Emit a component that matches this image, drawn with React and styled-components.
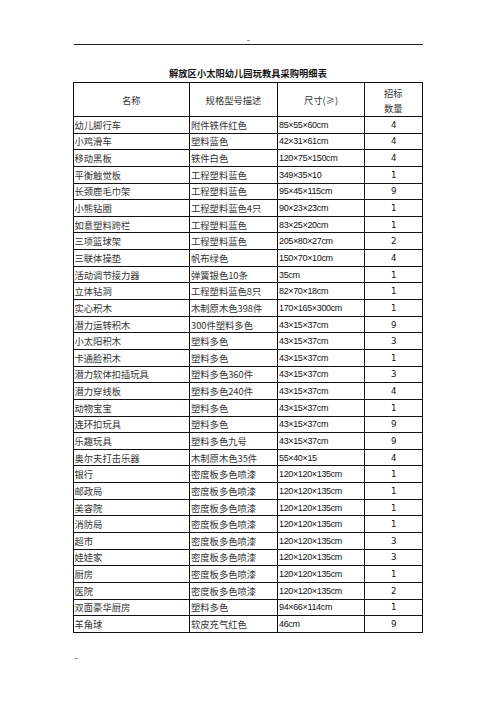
import React from "react";
import styled, { createGlobalStyle } from "styled-components";

const Global = createGlobalStyle`
  html, body { margin: 0; padding: 0; background: #fff; }
  body { font-family: "Noto Sans CJK SC", "Liberation Sans", sans-serif; color: #111; }
`;

const Page = styled.div`
  width: 496px;
  height: 702px;
  display: flex;
  flex-direction: column;
  align-items: center;
  box-sizing: border-box;
  padding-top: 40px;
`;

const Dot = styled.div`
  width: 3px;
  height: 1px;
  background: #999;
  align-self: ${(p) => (p.$left ? "flex-start" : "center")};
  margin-left: ${(p) => (p.$left ? "75px" : "0")};
  margin-top: ${(p) => p.$top || 0}px;
`;

const Rule = styled.div`
  width: 349px;
  height: 1px;
  background: #222;
  margin-top: 3px;
  margin-left: 1px;
`;

const Title = styled.h1`
  margin: 21px 0 0 0;
  font-size: 9.2px;
  font-weight: 700;
  line-height: 14px;
  letter-spacing: 0.1px;
  color: #111;
`;

const Table = styled.table`
  margin-top: 2px;
  margin-left: -1px;
  border-collapse: collapse;
  table-layout: fixed;
  width: 349px;
  font-size: 9.3px;
`;

const Th = styled.th`
  border: 1px solid #111;
  font-weight: 400;
  text-align: center;
  vertical-align: middle;
  padding: 2px 0 0 0;
  height: 31px;
  line-height: 15px;
  color: #333;
`;

const Td = styled.td`
  border: 1px solid #111;
  padding: 0 0 0 1px;
  height: 15.65px;
  line-height: 12px;
  vertical-align: middle;
  white-space: nowrap;
  overflow: hidden;
  color: ${(p) => (p.$num || p.$qty ? "#111" : "#333")};
  text-align: ${(p) => (p.$center ? "center" : "left")};
  font-family: ${(p) =>
    p.$num
      ? '"Liberation Sans", "Noto Sans CJK SC", sans-serif'
      : p.$qty
      ? '"DejaVu Sans", sans-serif'
      : '"Noto Sans CJK SC", sans-serif'};
  font-size: ${(p) => (p.$num ? "9px" : p.$qty ? "8.6px" : "9.3px")};
  letter-spacing: ${(p) => (p.$num ? "-0.35px" : "0")};
`;

const rows = [
  ["幼儿脚行车", "附件铁件红色", "85×55×60cm", "4"],
  ["小鸡滑车", "塑料蓝色", "42×31×61cm", "4"],
  ["移动黑板", "铁件白色", "120×75×150cm", "4"],
  ["平衡触觉板", "工程塑料蓝色", "349×35×10", "1"],
  ["长颈鹿毛巾架", "工程塑料蓝色", "95×45×115cm", "9"],
  ["小熊钻圈", "工程塑料蓝色4只", "90×23×23cm", "1"],
  ["如意塑料跨栏", "工程塑料蓝色", "83×25×20cm", "1"],
  ["三项篮球架", "工程塑料蓝色", "205×80×27cm", "2"],
  ["三联体操垫", "帆布绿色", "150×70×10cm", "4"],
  ["活动调节接力器", "弹簧银色10条", "35cm", "1"],
  ["立体钻洞", "工程塑料蓝色8只", "82×70×18cm", "1"],
  ["实心积木", "木制原木色398件", "170×165×300cm", "1"],
  ["潜力运转积木", "300件塑料多色", "43×15×37cm", "9"],
  ["小太阳积木", "塑料多色", "43×15×37cm", "3"],
  ["卡通脸积木", "塑料多色", "43×15×37cm", "1"],
  ["潜力软体扣插玩具", "塑料多色360件", "43×15×37cm", "3"],
  ["潜力穿线板", "塑料多色240件", "43×15×37cm", "4"],
  ["动物宝宝", "塑料多色", "43×15×37cm", "1"],
  ["连环扣玩具", "塑料多色", "43×15×37cm", "9"],
  ["乐趣玩具", "塑料多色九号", "43×15×37cm", "9"],
  ["奥尔夫打击乐器", "木制原木色35件", "55×40×15", "4"],
  ["银行", "密度板多色喷漆", "120×120×135cm", "1"],
  ["邮政局", "密度板多色喷漆", "120×120×135cm", "1"],
  ["美容院", "密度板多色喷漆", "120×120×135cm", "1"],
  ["消防局", "密度板多色喷漆", "120×120×135cm", "1"],
  ["超市", "密度板多色喷漆", "120×120×135cm", "3"],
  ["娃娃家", "密度板多色喷漆", "120×120×135cm", "3"],
  ["厨房", "密度板多色喷漆", "120×120×135cm", "1"],
  ["医院", "密度板多色喷漆", "120×120×135cm", "2"],
  ["双面豪华厨房", "塑料多色", "94×66×114cm", "1"],
  ["羊角球", "软皮充气红色", "46cm", "9"],
];

export default function App() {
  return (
    <Page>
      <Global />
      <Dot />
      <Rule />
      <Title>解放区小太阳幼儿园玩教具采购明细表</Title>
      <Table>
        <colgroup>
          <col style={{ width: "116.5px" }} />
          <col style={{ width: "88px" }} />
          <col style={{ width: "87px" }} />
          <col style={{ width: "57.5px" }} />
        </colgroup>
        <thead>
          <tr>
            <Th>名称</Th>
            <Th>规格型号描述</Th>
            <Th>尺寸(≥)</Th>
            <Th>
              招标
              <br />
              数量
            </Th>
          </tr>
        </thead>
        <tbody>
          {rows.map((r, i) => (
            <tr key={i}>
              <Td>{r[0]}</Td>
              <Td>{r[1]}</Td>
              <Td $num>{r[2]}</Td>
              <Td $qty $center>
                {r[3]}
              </Td>
            </tr>
          ))}
        </tbody>
      </Table>
      <Dot $left $top={25} />
    </Page>
  );
}
